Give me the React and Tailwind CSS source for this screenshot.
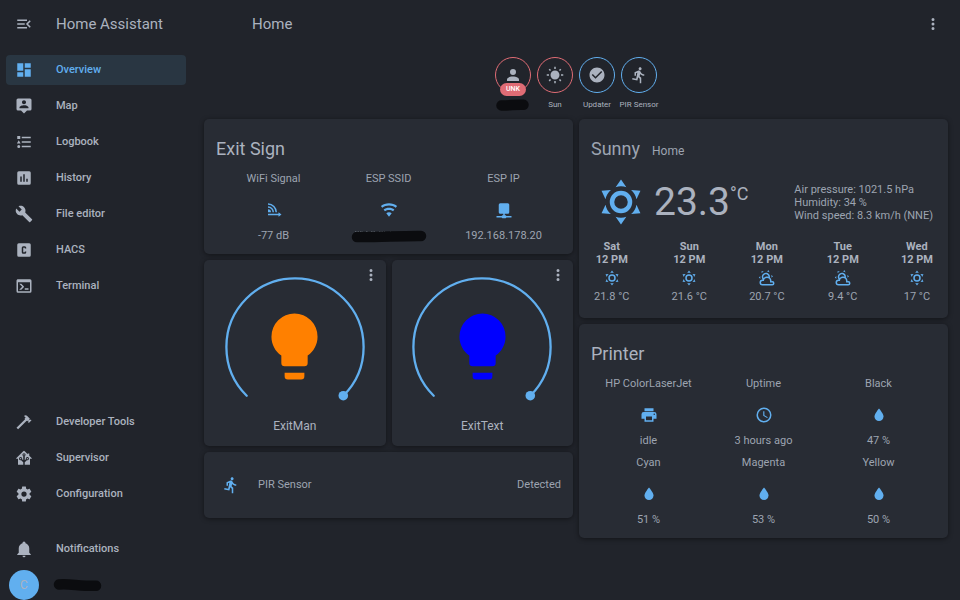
import React from "react";

const ICONS = {
  menuOpen: "M21,15.61L19.59,17L14.58,12L19.59,7L21,8.39L17.44,12L21,15.61M3,6H16V8H3V6M3,13V11H13V13H3M3,18V16H16V18H3Z",
  dots: "M12,16A2,2 0 0,1 14,18A2,2 0 0,1 12,20A2,2 0 0,1 10,18A2,2 0 0,1 12,16M12,10A2,2 0 0,1 14,12A2,2 0 0,1 12,14A2,2 0 0,1 10,12A2,2 0 0,1 12,10M12,4A2,2 0 0,1 14,6A2,2 0 0,1 12,8A2,2 0 0,1 10,6A2,2 0 0,1 12,4Z",
  dashboard: "M13,3V9H21V3M13,21H21V11H13M3,21H11V15H3M3,13H11V3H3V13Z",
  map: "M20,2H4A2,2 0 0,0 2,4V16A2,2 0 0,0 4,18H8L12,22L16,18H20A2,2 0 0,0 22,16V4A2,2 0 0,0 20,2M12,4.3C13.5,4.3 14.7,5.5 14.7,7C14.7,8.5 13.5,9.7 12,9.7C10.5,9.7 9.3,8.5 9.3,7C9.3,5.5 10.5,4.3 12,4.3M18,15H6V14.1C6,12.1 10,11 12,11C14,11 18,12.1 18,14.1V15Z",
  logbook: "M5,9.5L7.5,14H2.5L5,9.5M3,4H7V8H3V4M5,20A2,2 0 0,0 7,18A2,2 0 0,0 5,16A2,2 0 0,0 3,18A2,2 0 0,0 5,20M9,5V7H21V5H9M9,19H21V17H9V19M9,13H21V11H9V13Z",
  history: "M9,17H7V10H9V17M13,17H11V7H13V17M17,17H15V13H17V17M19,3H5A2,2 0 0,0 3,5V19A2,2 0 0,0 5,21H19A2,2 0 0,0 21,19V5A2,2 0 0,0 19,3Z",
  wrench: "M22.7,19L13.6,9.9C14.5,7.6 14,4.9 12.1,3C10.1,1 7.1,0.6 4.7,1.7L9,6L6,9L1.6,4.7C0.4,7.1 0.9,10.1 2.9,12.1C4.8,14 7.5,14.5 9.8,13.6L18.9,22.7C19.3,23.1 19.9,23.1 20.3,22.7L22.6,20.4C23.1,20 23.1,19.3 22.7,19Z",
  hacs: "M3,5A2,2 0 0,1 5,3H19A2,2 0 0,1 21,5V19A2,2 0 0,1 19,21H5A2,2 0 0,1 3,19V5M11,7A2,2 0 0,0 9,9V15A2,2 0 0,0 11,17H13A2,2 0 0,0 15,15V14H13V15H11V9H13V10H15V9A2,2 0 0,0 13,7H11Z",
  console: "M20,19V7H4V19H20M20,3A2,2 0 0,1 22,5V19A2,2 0 0,1 20,21H4A2,2 0 0,1 2,19V5C2,3.89 2.9,3 4,3H20M13,17V15H18V17H13M9.58,13L5.57,9H8.4L11.7,12.3C12.09,12.69 12.09,13.33 11.7,13.72L8.42,17H5.59L9.58,13Z",
  hammer: "M2,19.63L13.43,8.2L12.72,7.5L14.14,6.07L12,3.89C13.2,2.7 15.09,2.7 16.27,3.89L19.87,7.5L18.45,8.91H21.29L22,9.62L18.45,13.21L17.74,12.5V9.62L16.27,11.04L15.56,10.33L4.13,21.76L2,19.63Z",
  supervisor: "M21.8,13H20V21H13V17.67L15.79,14.88L16.5,15C17.66,15 18.6,14.06 18.6,12.9C18.6,11.74 17.66,10.8 16.5,10.8A2.1,2.1 0 0,0 14.4,12.9L14.5,13.61L13,15.13V9.65C13.66,9.29 14.1,8.6 14.1,7.8A2.1,2.1 0 0,0 12,5.7A2.1,2.1 0 0,0 9.9,7.8C9.9,8.6 10.34,9.29 11,9.65V15.13L9.5,13.61L9.6,12.9A2.1,2.1 0 0,0 7.5,10.8A2.1,2.1 0 0,0 5.4,12.9A2.1,2.1 0 0,0 7.5,15L8.21,14.88L11,17.67V21H4V13H2.25C1.83,13 1.42,13 1.42,12.79C1.43,12.57 1.85,12.15 2.28,11.72L11,3C11.33,2.67 11.67,2.33 12,2.33C12.33,2.33 12.67,2.67 13,3L17,7V6H19V9L21.78,11.78C22.18,12.18 22.59,12.59 22.6,12.8C22.6,13 22.2,13 21.8,13M7.5,12A0.9,0.9 0 0,1 8.4,12.9A0.9,0.9 0 0,1 7.5,13.8A0.9,0.9 0 0,1 6.6,12.9A0.9,0.9 0 0,1 7.5,12M16.5,12C17,12 17.4,12.4 17.4,12.9C17.4,13.4 17,13.8 16.5,13.8A0.9,0.9 0 0,1 15.6,12.9A0.9,0.9 0 0,1 16.5,12M12,6.9C12.5,6.9 12.9,7.3 12.9,7.8C12.9,8.3 12.5,8.7 12,8.7C11.5,8.7 11.1,8.3 11.1,7.8C11.1,7.3 11.5,6.9 12,6.9Z",
  cog: "M12,15.5A3.5,3.5 0 0,1 8.5,12A3.5,3.5 0 0,1 12,8.5A3.5,3.5 0 0,1 15.5,12A3.5,3.5 0 0,1 12,15.5M19.43,12.97C19.47,12.65 19.5,12.33 19.5,12C19.5,11.67 19.47,11.34 19.43,11L21.54,9.37C21.73,9.22 21.78,8.95 21.66,8.73L19.66,5.27C19.54,5.05 19.27,4.96 19.05,5.05L16.56,6.05C16.04,5.66 15.5,5.32 14.87,5.07L14.5,2.42C14.46,2.18 14.25,2 14,2H10C9.75,2 9.54,2.18 9.5,2.42L9.13,5.07C8.5,5.32 7.96,5.66 7.44,6.05L4.95,5.05C4.73,4.96 4.46,5.05 4.34,5.27L2.34,8.73C2.21,8.95 2.27,9.22 2.46,9.37L4.57,11C4.53,11.34 4.5,11.67 4.5,12C4.5,12.33 4.53,12.65 4.57,12.97L2.46,14.63C2.27,14.78 2.21,15.05 2.34,15.27L4.34,18.73C4.46,18.95 4.73,19.03 4.95,18.95L7.44,17.94C7.96,18.34 8.5,18.68 9.13,18.93L9.5,21.58C9.54,21.82 9.75,22 10,22H14C14.25,22 14.46,21.82 14.5,21.58L14.87,18.93C15.5,18.67 16.04,18.34 16.56,17.94L19.05,18.95C19.27,19.03 19.54,18.95 19.66,18.73L21.66,15.27C21.78,15.05 21.73,14.78 21.54,14.63L19.43,12.97Z",
  bell: "M21,19V20H3V19L5,17V11C5,7.9 7.03,5.17 10,4.29C10,4.19 10,4.1 10,4A2,2 0 0,1 12,2A2,2 0 0,1 14,4C14,4.1 14,4.19 14,4.29C16.97,5.17 19,7.9 19,11V17L21,19M14,21A2,2 0 0,1 12,23A2,2 0 0,1 10,21",
  account: "M12,4A4,4 0 0,1 16,8A4,4 0 0,1 12,12A4,4 0 0,1 8,8A4,4 0 0,1 12,4M12,14C16.42,14 20,15.79 20,18V20H4V18C4,15.79 7.58,14 12,14Z",
  sun: "M3.55 19.09L4.96 20.5L6.76 18.71L5.34 17.29M12 6C8.69 6 6 8.69 6 12S8.69 18 12 18 18 15.31 18 12C18 8.68 15.31 6 12 6M20 13H23V11H20M17.24 18.71L19.04 20.5L20.45 19.09L18.66 17.29M20.45 5L19.04 3.6L17.24 5.39L18.66 6.81M13 1H11V4H13M6.76 5.39L4.96 3.6L3.55 5L5.34 6.81L6.76 5.39M1 13H4V11H1M13 20H11V23H13",
  check: "M12 2C6.5 2 2 6.5 2 12S6.5 22 12 22 22 17.5 22 12 17.5 2 12 2M10 17L5 12L6.41 10.59L10 14.17L17.59 6.58L19 8L10 17Z",
  run: "M13.5,5.5C14.59,5.5 15.5,4.58 15.5,3.5C15.5,2.38 14.59,1.5 13.5,1.5C12.39,1.5 11.5,2.38 11.5,3.5C11.5,4.58 12.39,5.5 13.5,5.5M9.89,19.38L10.89,15L13,17V23H15V15.5L12.89,13.5L13.5,10.5C14.79,12 16.79,13 19,13V11C17.09,11 15.5,10 14.69,8.58L13.69,7C13.29,6.38 12.69,6 12,6C11.69,6 11.5,6.08 11.19,6.08L6,8.28V13H8V9.58L9.79,8.88L8.19,17L3.29,16L2.89,18L9.89,19.38Z",
  signal: "M4,3A12,12 0 0,1 16,15H14A10,10 0 0,0 4,5V3M4,7A8,8 0 0,1 12,15H10A6,6 0 0,0 4,9V7M4,11A4,4 0 0,1 8,15H4V11M4,17H18V15L22,18L18,21V19H4V17Z",
  wifi: "M12,21L15.6,16.2C14.6,15.45 13.35,15 12,15C10.65,15 9.4,15.45 8.4,16.2L12,21M12,3C7.95,3 4.21,4.34 1.2,6.6L3,9C5.5,7.12 8.62,6 12,6C15.38,6 18.5,7.12 21,9L22.8,6.6C19.79,4.34 16.05,3 12,3M12,9C9.3,9 6.81,9.89 4.8,11.4L6.6,13.8C8.1,12.67 9.97,12 12,12C14.03,12 15.9,12.67 17.4,13.8L19.2,11.4C17.19,9.89 14.7,9 12,9Z",
  network: "M17,3A2,2 0 0,1 19,5V15A2,2 0 0,1 17,17H13V19H14A1,1 0 0,1 15,20H22V22H15A1,1 0 0,1 14,23H10A1,1 0 0,1 9,22H2V20H9A1,1 0 0,1 10,19H11V17H7C5.89,17 5,16.1 5,15V5A2,2 0 0,1 7,3H17Z",
  bulb: "M12,2A7,7 0 0,0 5,9C5,11.38 6.19,13.47 8,14.74V17A1,1 0 0,0 9,18H15A1,1 0 0,0 16,17V14.74C17.81,13.47 19,11.38 19,9A7,7 0 0,0 12,2M9,21A1,1 0 0,0 10,22H14A1,1 0 0,0 15,21V20H9V21Z",
  printer: "M18,3H6V7H18M19,12A1,1 0 0,1 18,11A1,1 0 0,1 19,10A1,1 0 0,1 20,11A1,1 0 0,1 19,12M16,19H8V14H16M19,8H5A3,3 0 0,0 2,11V17H6V21H18V17H22V11A3,3 0 0,0 19,8Z",
  clock: "M12,20A8,8 0 0,0 20,12A8,8 0 0,0 12,4A8,8 0 0,0 4,12A8,8 0 0,0 12,20M12,2A10,10 0 0,1 22,12A10,10 0 0,1 12,22C6.47,22 2,17.5 2,12A10,10 0 0,1 12,2M12.5,7V12.25L17,14.92L16.25,16.15L11,13V7H12.5Z",
  water: "M12,20A6,6 0 0,1 6,14C6,10 12,3.25 12,3.25C12,3.25 18,10 18,14A6,6 0 0,1 12,20Z",
  sunny: "M12,7A5,5 0 0,1 17,12A5,5 0 0,1 12,17A5,5 0 0,1 7,12A5,5 0 0,1 12,7M12,9A3,3 0 0,0 9,12A3,3 0 0,0 12,15A3,3 0 0,0 15,12A3,3 0 0,0 12,9M12,2L14.39,5.42C13.65,5.15 12.84,5 12,5C11.16,5 10.35,5.15 9.61,5.42L12,2M3.34,7L7.5,6.65C6.9,7.16 6.36,7.78 5.94,8.5C5.5,9.24 5.25,10 5.11,10.79L3.34,7M3.36,17L5.12,13.23C5.26,14 5.53,14.78 5.95,15.5C6.37,16.24 6.91,16.86 7.5,17.37L3.36,17M20.65,7L18.88,10.79C18.74,10 18.47,9.23 18.05,8.5C17.63,7.78 17.1,7.15 16.5,6.64L20.65,7M20.64,17L16.5,17.36C17.09,16.85 17.62,16.22 18.04,15.5C18.46,14.77 18.73,14 18.87,13.21L20.64,17M12,22L9.59,18.56C10.33,18.83 11.14,19 12,19C12.82,19 13.63,18.83 14.37,18.56L12,22Z",
  partly: "M12.74,5.47C15.1,6.5 16.35,9.03 15.92,11.46C17.19,12.56 18,14.19 18,16V16.17C18.31,16.06 18.65,16 19,16A3,3 0 0,1 22,19A3,3 0 0,1 19,22H6A4,4 0 0,1 2,18A4,4 0 0,1 6,14H6.27C5,12.45 4.6,10.24 5.5,8.26C6.72,5.5 9.97,4.24 12.74,5.47M11.93,7.3C10.16,6.5 8.09,7.31 7.31,9.07C6.85,10.09 6.93,11.22 7.41,12.13C8.5,10.83 10.16,10 12,10C12.7,10 13.38,10.12 14,10.34C13.94,9.06 13.18,7.86 11.93,7.3M13.55,3.64C13,3.4 12.45,3.23 11.88,3.12L14.37,1.82L15.27,4.71C14.76,4.29 14.19,3.93 13.55,3.64M6.09,4.44C5.6,4.79 5.17,5.19 4.8,5.63L4.91,2.82L7.87,3.5C7.25,3.71 6.65,4.03 6.09,4.44M18,9.71C17.91,9.12 17.78,8.55 17.59,8L19.97,9.5L17.92,11.73C18.03,11.08 18.05,10.4 18,9.71M3.04,11.3C3.11,11.9 3.24,12.47 3.43,13L1.06,11.5L3.1,9.28C3,9.93 2.97,10.61 3.04,11.3M19,18H16V16A4,4 0 0,0 12,12A4,4 0 0,0 8,16H6A2,2 0 0,0 4,18A2,2 0 0,0 6,20H19A1,1 0 0,0 20,19A1,1 0 0,0 19,18Z",
};

function Icon({ name, className = "size-[18px]" }) {
  return (
    <svg viewBox="0 0 24 24" className={`shrink-0 ${className}`} fill="currentColor" fillRule="evenodd" aria-hidden="true">
      <path d={ICONS[name]} />
    </svg>
  );
}

function BadgeMarker() {
  return (
    <svg width="34" height="12" viewBox="0 0 34 12" aria-hidden="true">
      <path d="M5.500 6.400C14 6.500 20 5.500 27.500 5.800" stroke="#0b0c0f" strokeWidth="10.500" strokeLinecap="round" fill="none" />
    </svg>
  );
}

function SsidMarker() {
  return (
    <svg width="76" height="16" viewBox="0 0 76 16" aria-hidden="true">
      <path d="M4 3.500H12M15 3.500H17M20 3.500H25M28 3.500H34M39 3.500H40" stroke="#5c626d" strokeWidth="1" strokeDasharray="1.500 1" />
      <path d="M6 9C26 9.300 50 7.800 70 8" stroke="#0b0c0f" strokeWidth="10.500" strokeLinecap="round" fill="none" />
    </svg>
  );
}

function UserMarker() {
  return (
    <svg width="50" height="14" viewBox="0 0 50 14" aria-hidden="true">
      <path d="M6 6.500C16 5.500 26 8 43 7.800" stroke="#0b0c0f" strokeWidth="10.500" strokeLinecap="round" fill="none" />
    </svg>
  );
}

function NavItem({ icon, label, active }) {
  return (
    <a
      href="#"
      aria-current={active ? "page" : undefined}
      className={`mx-1.5 flex h-[30px] items-center gap-[23px] rounded-sm pl-[9px] text-[11px] font-medium ${
        active ? "bg-[#293642] text-[#61afef]" : "text-[#abb2bf]"
      }`}
    >
      <Icon name={icon} />
      {label}
    </a>
  );
}

function Sidebar() {
  return (
    <aside className="sticky top-0 flex h-screen w-48 shrink-0 flex-col">
      <div className="flex h-12 shrink-0 items-center gap-[23px] pl-[15px]">
        <button type="button" aria-label="Toggle sidebar">
          <Icon name="menuOpen" />
        </button>
        <span className="text-[15px]">Home Assistant</span>
      </div>
      <nav className="flex flex-1 flex-col gap-1.5 pt-[7px]">
        <NavItem icon="dashboard" label="Overview" active />
        <NavItem icon="map" label="Map" />
        <NavItem icon="logbook" label="Logbook" />
        <NavItem icon="history" label="History" />
        <NavItem icon="wrench" label="File editor" />
        <NavItem icon="hacs" label="HACS" />
        <NavItem icon="console" label="Terminal" />
        <div className="mt-auto mb-[19px] flex flex-col gap-1.5">
          <NavItem icon="hammer" label="Developer Tools" />
          <NavItem icon="supervisor" label="Supervisor" />
          <NavItem icon="cog" label="Configuration" />
        </div>
        <NavItem icon="bell" label="Notifications" />
        <a href="#" aria-label="Profile" className="flex h-[30px] items-center gap-3.5 pl-[9px]">
          <span className="flex size-[30px] items-center justify-center rounded-full bg-[#61afef] text-[12px] text-[#abb2bf]">C</span>
          <UserMarker />
        </a>
      </nav>
    </aside>
  );
}

function Badge({ icon, label, red, value }) {
  return (
    <button type="button" className="flex w-[42px] flex-col items-center">
      <span
        className={`relative flex size-9 items-center justify-center rounded-full border ${
          red ? "border-[#e06c75]" : "border-[#61afef]"
        }`}
      >
        <Icon name={icon} />
        {value && (
          <span className="absolute -bottom-1 rounded-full bg-[#e06c75] px-[6px] text-[7px] leading-[13px] font-medium text-white">
            {value}
          </span>
        )}
      </span>
      <span className="mt-1.5 flex h-3 items-center text-[8px] whitespace-nowrap">{label}</span>
    </button>
  );
}

function Card({ className = "", children }) {
  return (
    <section className={`rounded-[5px] bg-[#282c34] shadow-[0_1px_5px_rgba(0,0,0,0.45)] ${className}`}>{children}</section>
  );
}

function Glance({ title, items }) {
  return (
    <Card className="px-3 pt-3 pb-2.5">
      <h2 className="text-lg leading-9">{title}</h2>
      <div className="grid grid-cols-3 gap-y-1.5 pt-1">
        {items.map((it) => (
          <button type="button" key={it.label} className="flex flex-col items-center text-[11px] leading-4 text-[#9da4b1]">
            <span>{it.label}</span>
            <span className="mt-2 flex h-[30px] items-center text-[#61afef]">
              <Icon name={it.icon} />
            </span>
            <span className="mt-[3px] flex h-4 items-center">{it.value}</span>
          </button>
        ))}
      </div>
    </Card>
  );
}

function LightCard({ name, color }) {
  return (
    <Card className="relative flex flex-col items-center pt-[15px] pb-[11px]">
      <div className="grid justify-items-center">
        <svg viewBox="-72 -72 144 138" className="col-start-1 row-start-1 h-[138px] w-36" aria-hidden="true">
          <path d="M-48.300 48.700A68.600 68.600 0 1 1 48.300 48.700" fill="none" stroke="#61afef" strokeWidth="2.300" strokeLinecap="round" />
          <circle cx="48.300" cy="48.700" r="4.800" fill="#61afef" />
        </svg>
        <input type="range" min="0" max="100" defaultValue="100" aria-label={`${name} brightness`} className="sr-only" />
        <button type="button" aria-label={`Toggle ${name}`} className={`col-start-1 row-start-1 mt-8 self-start ${color}`}>
          <Icon name="bulb" className="size-[79px]" />
        </button>
      </div>
      <h3 className="mt-1 text-[12px] leading-[18px]">{name}</h3>
      <button type="button" aria-label={`${name} options`} className="absolute top-1.5 right-1.5">
        <Icon name="dots" />
      </button>
    </Card>
  );
}

const FORECAST = [
  { day: "Sat", icon: "sunny", temp: "21.8 °C" },
  { day: "Sun", icon: "sunny", temp: "21.6 °C" },
  { day: "Mon", icon: "partly", temp: "20.7 °C" },
  { day: "Tue", icon: "partly", temp: "9.4 °C" },
  { day: "Wed", icon: "sunny", temp: "17 °C" },
];

function WeatherCard() {
  return (
    <Card className="px-3 pt-3 pb-[15px]">
      <h2 className="flex items-baseline gap-3 text-lg leading-9 text-[#9da4b1]">
        Sunny <span className="text-[12px]">Home</span>
      </h2>
      <div className="flex h-[66px] items-center px-[3px]">
        <Icon name="sunny" className="size-[54px] text-[#61afef]" />
        <div className="ml-1.5 flex items-start">
          <span className="text-[39px] leading-10">23.3</span>
          <span className="text-lg leading-6">°C</span>
        </div>
        <div className="ml-auto text-[11px] leading-[13px] text-[#9da4b1]">
          <p>Air pressure: 1021.5 hPa</p>
          <p>Humidity: 34 %</p>
          <p>Wind speed: 8.3 km/h (NNE)</p>
        </div>
      </div>
      <div className="mt-[5px] flex justify-between px-[3px] text-[11px] leading-[13px]">
        {FORECAST.map((f) => (
          <div key={f.day} className="flex flex-col items-center">
            <span className="font-bold">{f.day}</span>
            <span className="font-bold">12 PM</span>
            <Icon name={f.icon} className="my-[3px] size-[18px] text-[#61afef]" />
            <span className="text-[#9da4b1]">{f.temp}</span>
          </div>
        ))}
      </div>
    </Card>
  );
}

export default function App() {
  return (
    <div className="flex min-h-screen bg-[#21242b] font-[Roboto,sans-serif] text-[#abb2bf]">
      <Sidebar />
      <div className="flex min-w-0 flex-1 flex-col">
        <header className="flex h-12 items-center justify-between pr-[18px] pl-[60px]">
          <h1 className="text-[15px]">Home</h1>
          <button type="button" aria-label="Dashboard menu">
            <Icon name="dots" />
          </button>
        </header>
        <main className="px-3 pt-[9px]">
          <div className="flex justify-center">
            <Badge icon="account" label={<BadgeMarker />} red value="UNK" />
            <Badge icon="sun" label="Sun" red />
            <Badge icon="check" label="Updater" />
            <Badge icon="run" label="PIR Sensor" />
          </div>
          <div className="mt-2 grid grid-cols-2 items-start gap-1.5">
            <div className="flex flex-col gap-1.5">
              <Glance
                title="Exit Sign"
                items={[
                  { label: "WiFi Signal", icon: "signal", value: "-77 dB" },
                  { label: "ESP SSID", icon: "wifi", value: <SsidMarker /> },
                  { label: "ESP IP", icon: "network", value: "192.168.178.20" },
                ]}
              />
              <div className="grid grid-cols-2 gap-1.5">
                <LightCard name="ExitMan" color="text-[#ff8000]" />
                <LightCard name="ExitText" color="text-[#0000ff]" />
              </div>
              <Card>
                <button type="button" className="flex h-[66px] w-full items-center px-3 text-[11px] text-[#9da4b1]">
                  <span className="flex w-[30px] justify-center text-[#61afef]">
                    <Icon name="run" />
                  </span>
                  <span className="ml-3">PIR Sensor</span>
                  <span className="ml-auto">Detected</span>
                </button>
              </Card>
            </div>
            <div className="flex flex-col gap-1.5">
              <WeatherCard />
              <Glance
                title="Printer"
                items={[
                  { label: "HP ColorLaserJet", icon: "printer", value: "idle" },
                  { label: "Uptime", icon: "clock", value: "3 hours ago" },
                  { label: "Black", icon: "water", value: "47 %" },
                  { label: "Cyan", icon: "water", value: "51 %" },
                  { label: "Magenta", icon: "water", value: "53 %" },
                  { label: "Yellow", icon: "water", value: "50 %" },
                ]}
              />
            </div>
          </div>
        </main>
      </div>
    </div>
  );
}
